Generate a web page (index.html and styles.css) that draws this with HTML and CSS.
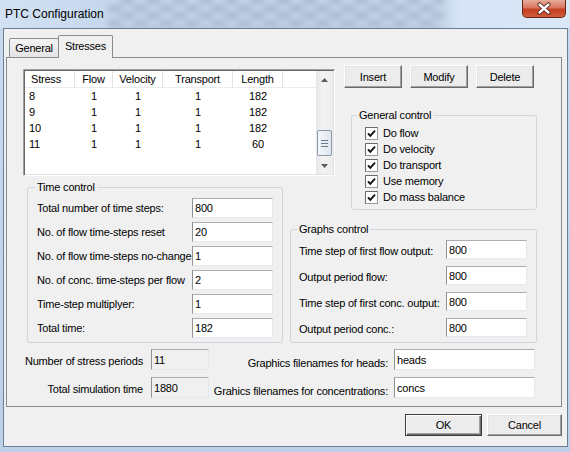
FILE: index.html
```html
<!DOCTYPE html>
<html>
<head>
<meta charset="utf-8">
<title>PTC Configuration</title>
<link rel="stylesheet" href="styles.css">
</head>
<body>
<div class="window">
  <div class="titlebar">
    <div class="glass"></div>
    <span class="title">PTC Configuration</span>
    <div class="close">
      <svg width="42" height="17" viewBox="0 0 42 17">
        <path d="M16.5 4.5 L25.5 12.5 M25.5 4.5 L16.5 12.5" stroke="#4b1d14" stroke-width="4.2" stroke-linecap="round"/>
        <path d="M16.5 4.5 L25.5 12.5 M25.5 4.5 L16.5 12.5" stroke="#ffffff" stroke-width="2.4" stroke-linecap="round"/>
      </svg>
    </div>
  </div>
  <div class="client">
    <div class="tabs">
      <div class="tab tab-general">General</div>
      <div class="tab tab-active">Stresses</div>
    </div>
    <div class="panel">
      <div class="layout">
        <div class="btns">
          <button class="btn btn-small">Insert</button>
          <button class="btn btn-small">Modify</button>
          <button class="btn btn-small">Delete</button>
        </div>

        <div class="listview">
          <div class="lv">
            <div class="hd hd-first">Stress</div>
            <div class="hd">Flow</div>
            <div class="hd">Velocity</div>
            <div class="hd">Transport</div>
            <div class="hd">Length</div>
            <div class="hd hd-fill"></div>

            <div class="cell cell-first">8</div><div class="cell">1</div><div class="cell">1</div><div class="cell">1</div><div class="cell">182</div><div class="cell"></div>
            <div class="cell cell-first">9</div><div class="cell">1</div><div class="cell">1</div><div class="cell">1</div><div class="cell">182</div><div class="cell"></div>
            <div class="cell cell-first">10</div><div class="cell">1</div><div class="cell">1</div><div class="cell">1</div><div class="cell">182</div><div class="cell"></div>
            <div class="cell cell-first">11</div><div class="cell">1</div><div class="cell">1</div><div class="cell">1</div><div class="cell">60</div><div class="cell"></div>
          </div>
          <div class="vscroll">
            <div class="sb-btn">
              <svg width="7" height="4" viewBox="0 0 7 4"><path d="M0 4 L3.5 0 L7 4 Z" fill="#5a5a5a"/></svg>
            </div>
            <div class="sb-track">
              <div class="sb-thumb">
                <svg width="7" height="7" viewBox="0 0 7 7"><path d="M0 0.5H7M0 3.5H7M0 6.5H7" stroke="#687a90" stroke-width="1"/></svg>
              </div>
            </div>
            <div class="sb-btn">
              <svg width="7" height="4" viewBox="0 0 7 4"><path d="M0 0 L3.5 4 L7 0 Z" fill="#5a5a5a"/></svg>
            </div>
          </div>
        </div>

        <fieldset class="group general">
          <legend>General control</legend>
          <div class="checks">
            <div class="check"><svg class="cb" width="13" height="13" viewBox="0 0 13 13"><rect x="0.5" y="0.5" width="12" height="12" fill="#fff" stroke="#9a9a9a"/><path d="M0.5 12.5V0.5H12.5" fill="none" stroke="#6b6b6b"/><path d="M3 6.3 L5.3 8.8 L10 3.6" fill="none" stroke="#111" stroke-width="1.9"/></svg><span>Do flow</span></div>
            <div class="check"><svg class="cb" width="13" height="13" viewBox="0 0 13 13"><rect x="0.5" y="0.5" width="12" height="12" fill="#fff" stroke="#9a9a9a"/><path d="M0.5 12.5V0.5H12.5" fill="none" stroke="#6b6b6b"/><path d="M3 6.3 L5.3 8.8 L10 3.6" fill="none" stroke="#111" stroke-width="1.9"/></svg><span>Do velocity</span></div>
            <div class="check"><svg class="cb" width="13" height="13" viewBox="0 0 13 13"><rect x="0.5" y="0.5" width="12" height="12" fill="#fff" stroke="#9a9a9a"/><path d="M0.5 12.5V0.5H12.5" fill="none" stroke="#6b6b6b"/><path d="M3 6.3 L5.3 8.8 L10 3.6" fill="none" stroke="#111" stroke-width="1.9"/></svg><span>Do transport</span></div>
            <div class="check"><svg class="cb" width="13" height="13" viewBox="0 0 13 13"><rect x="0.5" y="0.5" width="12" height="12" fill="#fff" stroke="#9a9a9a"/><path d="M0.5 12.5V0.5H12.5" fill="none" stroke="#6b6b6b"/><path d="M3 6.3 L5.3 8.8 L10 3.6" fill="none" stroke="#111" stroke-width="1.9"/></svg><span>Use memory</span></div>
            <div class="check"><svg class="cb" width="13" height="13" viewBox="0 0 13 13"><rect x="0.5" y="0.5" width="12" height="12" fill="#fff" stroke="#9a9a9a"/><path d="M0.5 12.5V0.5H12.5" fill="none" stroke="#6b6b6b"/><path d="M3 6.3 L5.3 8.8 L10 3.6" fill="none" stroke="#111" stroke-width="1.9"/></svg><span>Do mass balance</span></div>
          </div>
        </fieldset>

        <fieldset class="group time">
          <legend>Time control</legend>
          <div class="form time-form">
            <label>Total number of time steps:</label><input class="tb" type="text" value="800">
            <label>No. of flow time-steps reset</label><input class="tb" type="text" value="20">
            <label>No. of flow time-steps no-change</label><input class="tb" type="text" value="1">
            <label>No. of conc. time-steps per flow</label><input class="tb" type="text" value="2">
            <label>Time-step multiplyer:</label><input class="tb" type="text" value="1">
            <label>Total time:</label><input class="tb" type="text" value="182">
          </div>
        </fieldset>

        <fieldset class="group graphs">
          <legend>Graphs control</legend>
          <div class="form graphs-form">
            <label>Time step of first flow output:</label><input class="tb" type="text" value="800">
            <label>Output period flow:</label><input class="tb" type="text" value="800">
            <label>Time step of first conc. output:</label><input class="tb" type="text" value="800">
            <label>Output period conc.:</label><input class="tb" type="text" value="800">
          </div>
        </fieldset>
      </div>

      <div class="summary">
        <label class="sum-label">Number of stress periods</label>
        <input class="tb tb-ro" type="text" value="11" readonly>
        <label class="file-label">Graphics filenames for heads:</label>
        <input class="tb tb-file" type="text" value="heads">
        <label class="sum-label">Total simulation time</label>
        <input class="tb tb-ro" type="text" value="1880" readonly>
        <label class="file-label">Grahics filenames for concentrations:</label>
        <input class="tb tb-file" type="text" value="concs">
      </div>
    </div>
    <div class="footer">
      <button class="btn btn-default btn-ok">OK</button>
      <button class="btn btn-cancel">Cancel</button>
    </div>
  </div>
</div>
</body>
</html>
```

FILE: styles.css
```css
body {
  margin: 0;
  background: #c8d9ee;
  font-family: "Liberation Sans", Arial, sans-serif;
  font-size: 11px;
  letter-spacing: -0.2px;
  color: #000;
}

.window {
  width: 570px;
  height: 452px;
  overflow: hidden;
  background: linear-gradient(to bottom, #c9daef, #bcd0e8);
}

/* ---------- title bar ---------- */
.titlebar {
  position: relative;
  height: 28px;
  display: flex;
  align-items: center;
  padding-left: 5px;
  overflow: hidden;
  background: linear-gradient(to right, #d2e2f4 0, #c6d8ee 100px, #bccde3 300px, #c8d8ec 445px, #d6e5f6 460px, #d9e7f7 100%);
}

.glass {
  position: absolute;
  left: 108px;
  top: -3px;
  width: 335px;
  height: 34px;
  background: repeating-conic-gradient(#9fb3cc 0 25%, #c9d8ea 0 50%) 0 0 / 26px 15px;
  filter: blur(3px);
  opacity: 0.85;
}

.title {
  position: relative;
  font-size: 12px;
  letter-spacing: 0;
  color: #000;
}

.close {
  position: relative;
  margin-left: auto;
  margin-right: 4px;
  align-self: flex-start;
  width: 44px;
  height: 18px;
  box-sizing: border-box;
  border: 1px solid #6a2619;
  border-top: none;
  border-radius: 0 0 5px 5px;
  background: linear-gradient(to bottom, #e9ab9b 0, #d9765f 45%, #c3401f 55%, #cf5d3c 100%);
  display: flex;
  align-items: center;
  justify-content: center;
}

/* ---------- client ---------- */
.client {
  margin-left: 3px;
  width: 565px;
  height: 419px;
  box-sizing: border-box;
  border: 1px solid #6d7d92;
  background: #f0f0f0;
  padding: 6px 5px 0 2px;
}

.tabs {
  height: 22px;
  display: flex;
  align-items: flex-end;
  padding-left: 3px;
}

.tab {
  position: relative;
  z-index: 1;
  box-sizing: border-box;
  height: 19px;
  border: 1px solid #898c95;
  border-bottom: none;
  border-radius: 2px 2px 0 0;
  background: linear-gradient(to bottom, #f4f4f4, #e4e4e4);
  display: flex;
  align-items: center;
  justify-content: center;
}

.tab-general {
  width: 50px;
}

.tab-active {
  width: 55px;
  height: 23px;
  margin-left: -1px;
  margin-bottom: -1px;
  background: #f0f0f0;
  padding-bottom: 2px;
}

.panel {
  position: relative;
  box-sizing: border-box;
  height: 350px;
  border: 1px solid #898c95;
  background: #f0f0f0;
}

/* ---------- main grid ---------- */
.layout {
  display: grid;
  grid-template-columns: 267px 54px 193px;
  grid-template-rows: 44px 72px 42px 120px;
  padding: 7px 0 0 16px;
}

.btns {
  grid-column: 3;
  grid-row: 1;
  display: flex;
  gap: 8px;
  align-items: flex-start;
}

.btn {
  box-sizing: border-box;
  margin: 0;
  padding: 0;
  font: inherit;
  letter-spacing: inherit;
  color: #000;
  background: #ececec;
  border: 1px solid;
  border-color: #ffffff #696969 #696969 #ffffff;
  box-shadow: inset -1px -1px #a0a0a0, inset 1px 1px #e3e3e3;
}

.btn-small {
  width: 58px;
  height: 23px;
}

.btn-default {
  border-color: #3c3c3c;
  box-shadow: inset 1px 1px #ffffff, inset -1px -1px #696969, inset -2px -2px #a0a0a0;
}

.btn-ok {
  width: 77px;
  height: 22px;
}

.btn-cancel {
  width: 75px;
  height: 22px;
}

/* ---------- list view ---------- */
.listview {
  grid-column: 1 / 3;
  grid-row: 1 / 3;
  align-self: start;
  margin-top: 4px;
  width: 312px;
  height: 107px;
  box-sizing: border-box;
  padding: 1px;
  border: 1px solid;
  border-color: #a0a0a0 #ffffff #ffffff #a0a0a0;
  box-shadow: inset 1px 1px #696969, inset -1px -1px #e3e3e3;
  background: #fff;
  display: flex;
}

.lv {
  flex: 1;
  display: grid;
  grid-template-columns: 50px 38px 50px 70px 50px 1fr;
  grid-template-rows: 17px repeat(4, 16px);
  align-content: start;
}

.hd {
  box-sizing: border-box;
  border-right: 1px solid #e3e3e3;
  border-bottom: 1px solid #ececec;
  line-height: 16px;
  text-align: center;
  background: #fff;
}

.hd-first {
  text-align: left;
  padding-left: 6px;
}

.hd-fill {
  border-right: none;
}

.cell {
  line-height: 16px;
  text-align: center;
}

.cell-first {
  text-align: left;
  padding-left: 4px;
}

.vscroll {
  width: 17px;
  display: flex;
  flex-direction: column;
  background: linear-gradient(to right, #e6e6e6, #f3f3f3 40%, #ececec);
}

.sb-btn {
  height: 17px;
  display: flex;
  align-items: center;
  justify-content: center;
}

.sb-track {
  flex: 1;
  display: flex;
  flex-direction: column;
  justify-content: flex-end;
  align-items: center;
}

.sb-thumb {
  width: 15px;
  height: 26px;
  margin-bottom: 1px;
  box-sizing: border-box;
  border: 1px solid #8c98a8;
  border-radius: 2px;
  background: linear-gradient(to right, #f4f7fa, #dde5ee);
  display: flex;
  align-items: center;
  justify-content: center;
}

/* ---------- group boxes ---------- */
.group {
  margin: 0;
  min-width: 0;
  box-sizing: border-box;
  border: 1px solid #cfd6db;
  border-radius: 3px;
}

.group legend {
  padding: 0 2px;
  margin-left: -2px;
  line-height: 13px;
}

.general {
  grid-column: 3;
  grid-row: 2 / 4;
  align-self: start;
  margin-left: 7px;
  width: 186px;
  padding: 0 8px 4px 13px;
}

.general legend {
  margin-left: -8px;
}

.checks {
  padding-top: 3px;
}

.check {
  height: 16px;
  display: flex;
  align-items: center;
  gap: 5px;
}

.cb {
  flex: none;
}

.time {
  grid-column: 1;
  grid-row: 3 / 5;
  align-self: start;
  margin-left: 4px;
  width: 256px;
  padding: 0 9px 4px 9px;
}

.graphs {
  grid-column: 2 / 4;
  grid-row: 4;
  align-self: start;
  width: 247px;
  padding: 0 9px 5px 8px;
}

.form {
  display: grid;
  align-items: center;
  padding-top: 4px;
}

.time-form {
  grid-template-columns: 1fr 81px;
  grid-auto-rows: 20px;
  row-gap: 4px;
}

.graphs-form {
  grid-template-columns: 1fr 81px;
  grid-auto-rows: 19px;
  row-gap: 7px;
}

.graphs-form label {
  padding-top: 3px;
}

.tb {
  box-sizing: border-box;
  width: 81px;
  height: 100%;
  margin: 0;
  padding: 0 2px;
  font: inherit;
  letter-spacing: inherit;
  color: #000;
  background: #fff;
  border: 1px solid;
  border-color: #abadb3 #e3e9ef #e3e9ef #8e9196;
  outline: none;
}

/* ---------- summary ---------- */
.summary {
  display: grid;
  grid-template-columns: 128px 58px 185px 141px;
  grid-template-rows: 21px 21px;
  row-gap: 7px;
  margin-top: 6px;
  padding-left: 16px;
}

.sum-label {
  align-self: center;
  text-align: right;
  padding-right: 8px;
  padding-top: 3px;
}

.file-label {
  align-self: end;
  text-align: right;
  padding-right: 6px;
  line-height: 13px;
}

.tb-ro {
  width: 58px;
  background: #f0f0f0;
}

.tb-file {
  width: 141px;
}

/* ---------- footer ---------- */
.footer {
  display: flex;
  justify-content: flex-end;
  gap: 5px;
  margin-top: 7px;
}
```
